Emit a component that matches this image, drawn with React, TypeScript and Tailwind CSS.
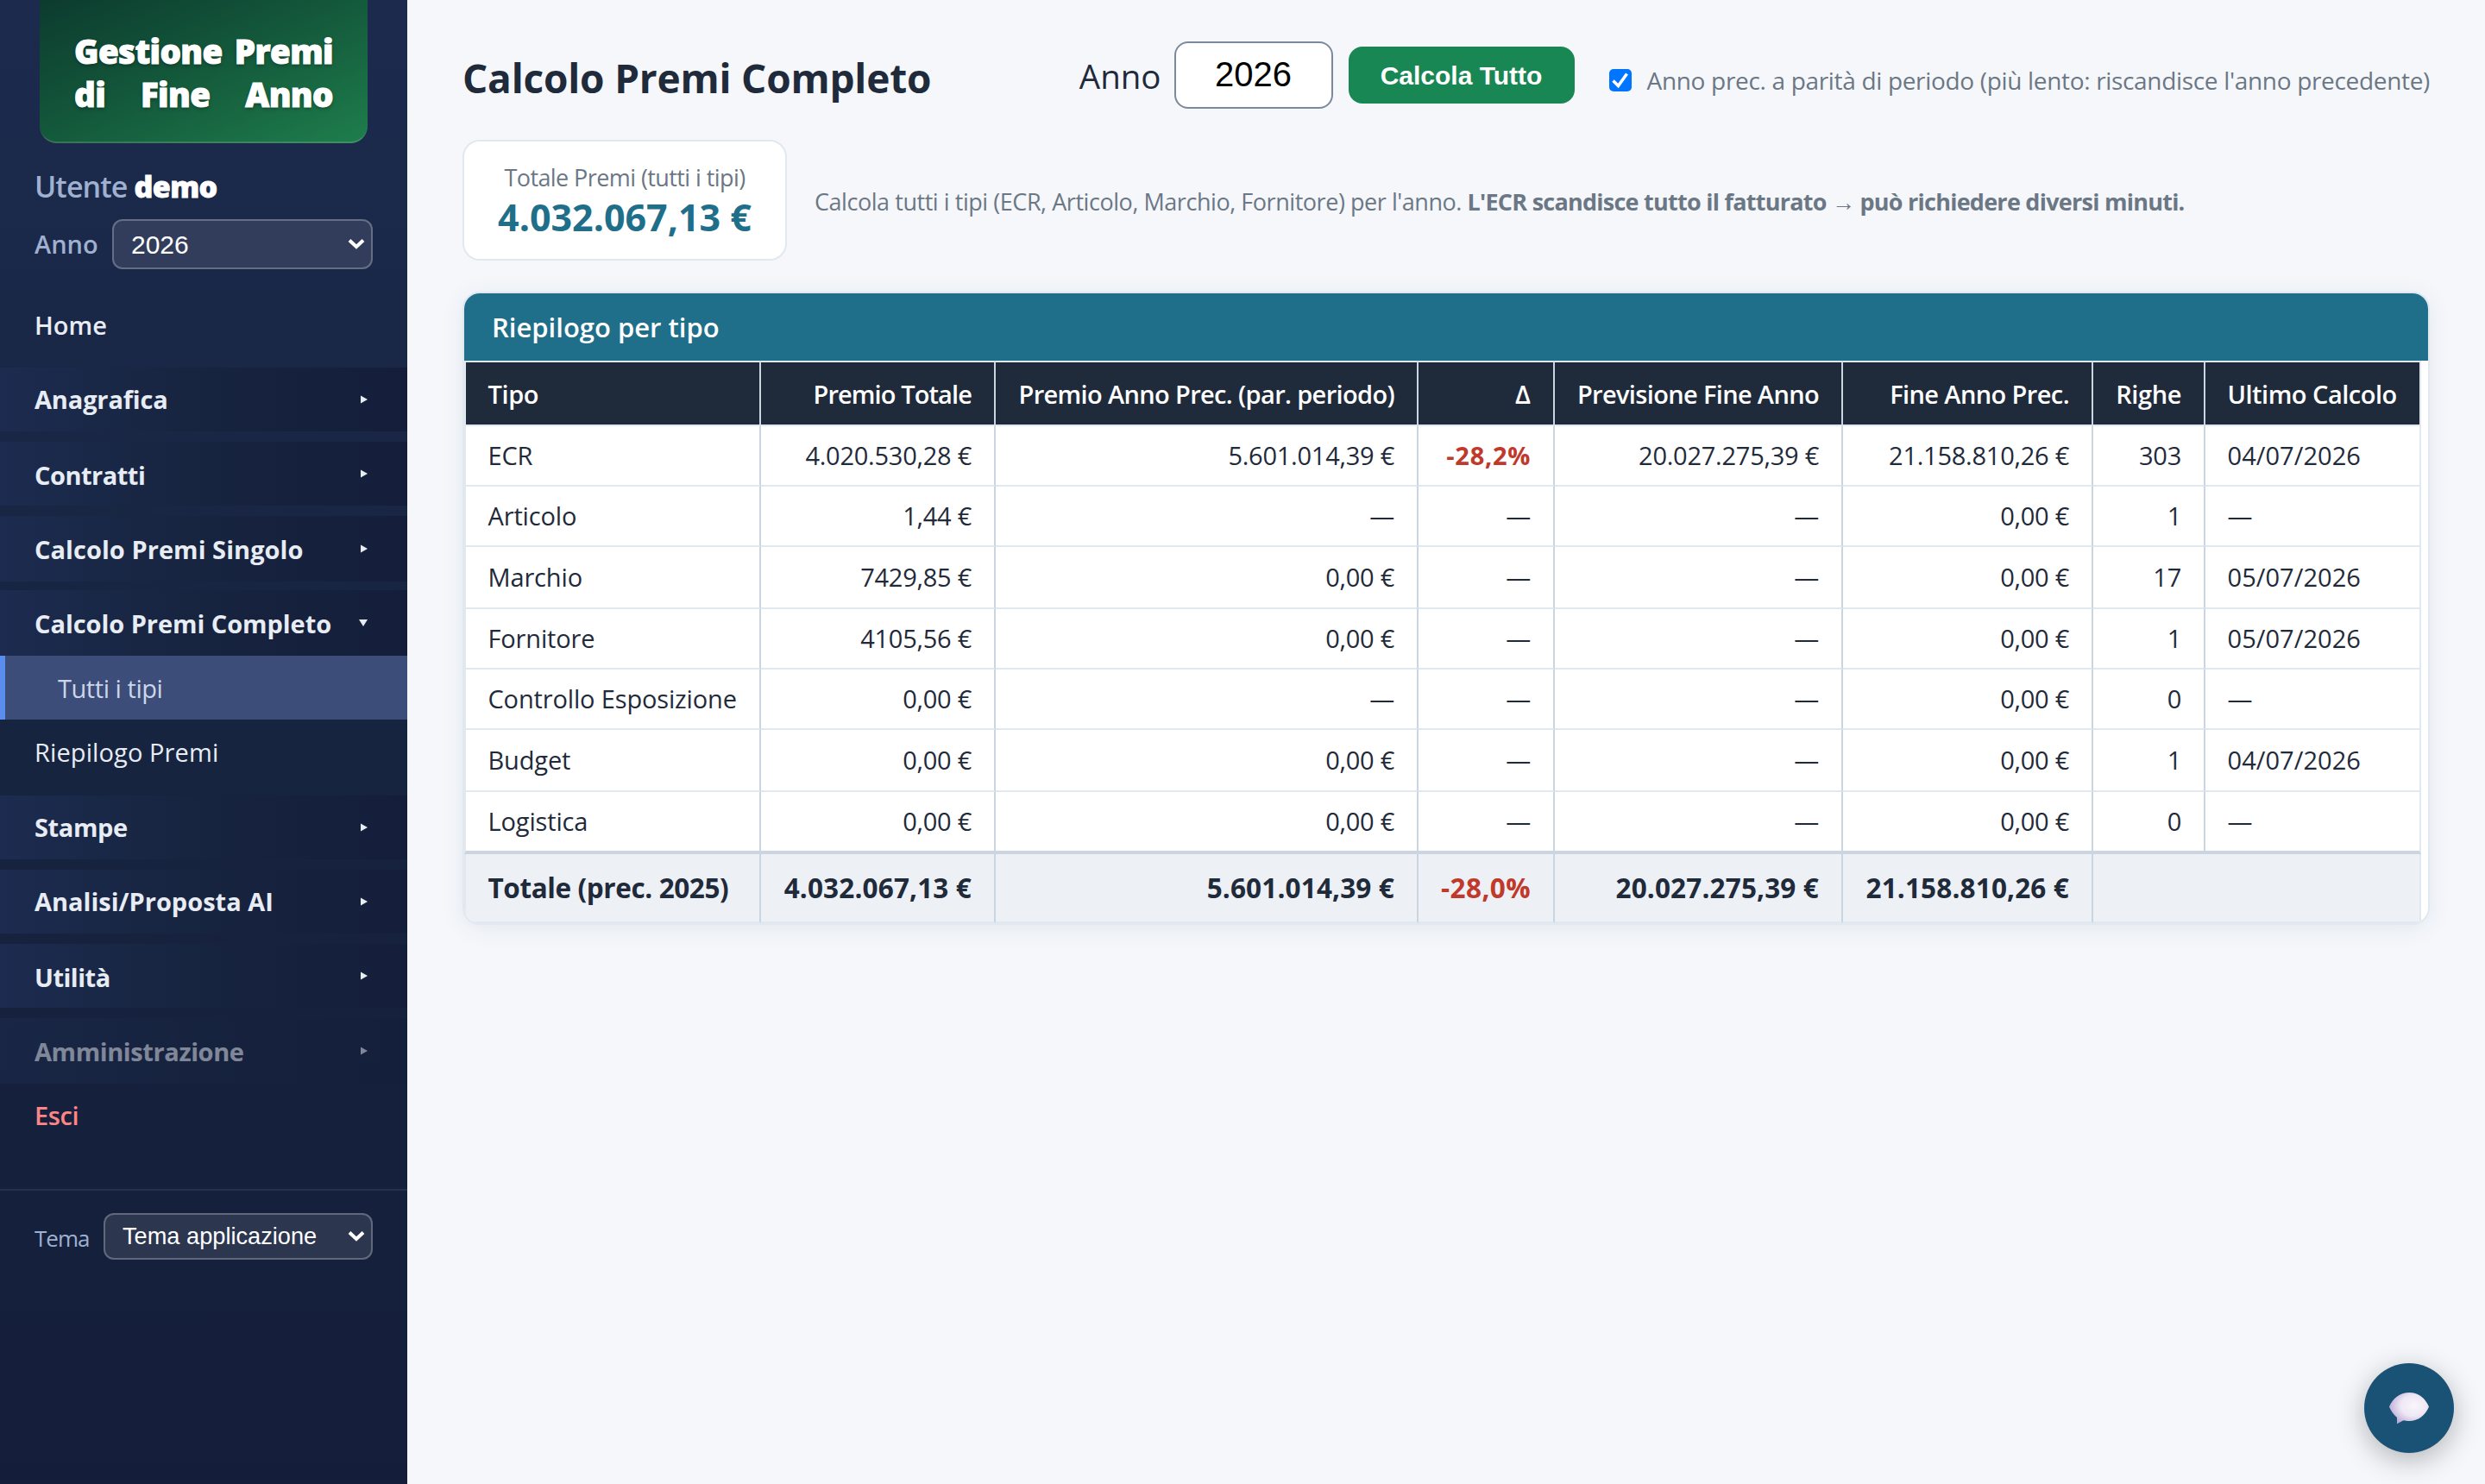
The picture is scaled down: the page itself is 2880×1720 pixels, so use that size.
import clsx from "clsx";

type MenuItem = {
  label: string;
  className: string;
  textClass?: string;
  open?: boolean;
  disabled?: boolean;
};

const GROUPS_TOP: MenuItem[] = [
  { label: "Anagrafica", className: "mt-3 h-[74px]", textClass: "tracking-[-0.15px]" },
  { label: "Contratti", className: "mt-3 h-[74px]", textClass: "pt-[3px] tracking-[-0.5px]" },
  { label: "Calcolo Premi Singolo", className: "mt-3 h-[76px]", textClass: "pt-px tracking-[0.05px]" },
  { label: "Calcolo Premi Completo", className: "mt-2.5 h-[76px]", textClass: "pt-px tracking-[-0.05px]", open: true },
];

const GROUPS_BOTTOM: MenuItem[] = [
  { label: "Stampe", className: "mt-3 h-[74px]", textClass: "tracking-[-0.4px]" },
  { label: "Analisi/Proposta AI", className: "mt-3 h-[74px]", textClass: "" },
  { label: "Utilità", className: "mt-3 h-[74px]", textClass: "pt-[3px] tracking-[-0.5px]" },
  { label: "Amministrazione", className: "mt-3 h-[76px]", textClass: "pt-px tracking-[-0.4px]", disabled: true },
];

const COLUMNS = [
  { label: "Tipo", width: "w-[344px]", head: "tracking-[-0.4px]", body: "tracking-[-0.15px]" },
  { label: "Premio Totale", width: "w-[272px]", head: "tracking-[-0.9px]", body: "tracking-[-0.25px]", right: true },
  { label: "Premio Anno Prec. (par. periodo)", width: "w-[490px]", head: "tracking-[-0.65px]", body: "tracking-[-0.25px]", right: true },
  { label: "Δ", width: "w-[158px]", head: "", body: "tracking-[-0.25px]", right: true },
  { label: "Previsione Fine Anno", width: "w-[334px]", head: "tracking-[-0.65px]", body: "tracking-[-0.25px]", right: true },
  { label: "Fine Anno Prec.", width: "w-[290px]", head: "tracking-[-0.6px]", body: "tracking-[-0.25px]", right: true },
  { label: "Righe", width: "w-[130px]", head: "tracking-[-0.4px]", body: "tracking-[-0.25px]", right: true },
  { label: "Ultimo Calcolo", width: "w-[250px]", head: "tracking-[-0.5px]", body: "tracking-[0.05px]" },
];

const ROWS = [
  { h: "h-[70px]", cells: ["ECR", "4.020.530,28 €", "5.601.014,39 €", "-28,2%", "20.027.275,39 €", "21.158.810,26 €", "303", "04/07/2026"] },
  { h: "h-[70px]", cells: ["Articolo", "1,44 €", "—", "—", "—", "0,00 €", "1", "—"] },
  { h: "h-[72px]", cells: ["Marchio", "7429,85 €", "0,00 €", "—", "—", "0,00 €", "17", "05/07/2026"] },
  { h: "h-[70px]", cells: ["Fornitore", "4105,56 €", "0,00 €", "—", "—", "0,00 €", "1", "05/07/2026"] },
  { h: "h-[70px]", cells: ["Controllo Esposizione", "0,00 €", "—", "—", "—", "0,00 €", "0", "—"] },
  { h: "h-[72px]", cells: ["Budget", "0,00 €", "0,00 €", "—", "—", "0,00 €", "1", "04/07/2026"] },
  { h: "h-[72px]", cells: ["Logistica", "0,00 €", "0,00 €", "—", "—", "0,00 €", "0", "—"] },
];

const TOTALS = ["Totale (prec. 2025)", "4.032.067,13 €", "5.601.014,39 €", "-28,0%", "20.027.275,39 €", "21.158.810,26 €"];

function Arrow({ open }: { open?: boolean }) {
  return (
    <svg viewBox="0 0 10 10" className="mr-[46px] h-2.5 w-2.5 shrink-0 fill-current">
      {open ? <path d="M0 1h10L5 9z" /> : <path d="M2 0.5l8 4.5-8 4.5z" />}
    </svg>
  );
}

function Chevron() {
  return (
    <svg viewBox="0 0 20 14" className="h-3.5 w-5 shrink-0" fill="none" stroke="#fff" strokeWidth="4">
      <path d="M2 2.5l8 7.5 8-7.5" />
    </svg>
  );
}

function Select({ value, className }: { value: string; className: string }) {
  return (
    <div
      className={clsx(
        "flex items-center justify-between rounded-xl border-2 border-white/25 bg-white/10 pl-5 pr-[7px] font-['Liberation_Sans',sans-serif] text-white",
        className,
      )}
    >
      <span>{value}</span>
      <Chevron />
    </div>
  );
}

function MenuGroup({ item }: { item: MenuItem }) {
  return (
    <div
      className={clsx(
        "flex items-center justify-between bg-linear-to-r from-[#1c2b4f] via-[#17243f] to-[#141e3a] pl-10 font-bold text-[#e8ecf4]",
        item.className,
        item.disabled && "opacity-50",
      )}
    >
      <span className={item.textClass}>{item.label}</span>
      <Arrow open={item.open} />
    </div>
  );
}

function Sidebar() {
  return (
    <aside className="flex w-[472px] shrink-0 flex-col bg-linear-to-b from-[#1c2a4e] via-[#17243f] to-[#141e3a] text-[29px] whitespace-nowrap">
      <div className="mx-[46px] h-[166px] rounded-b-[20px] border-b-2 border-white/15 bg-linear-to-br from-[#0c3b2e] via-[#145a3c] to-[#1e7e4c] bg-origin-border px-10 pt-[34px] text-[38.5px] leading-[50px] font-extrabold tracking-[-0.6px] text-white [-webkit-text-stroke:1px_white] [text-shadow:0_2px_4px_rgba(0,0,0,0.35)]">
        <div className="flex justify-between">
          <span>Gestione</span>
          <span>Premi</span>
        </div>
        <div className="flex justify-between">
          <span>di</span>
          <span>Fine</span>
          <span>Anno</span>
        </div>
      </div>

      <div className="mt-7 pl-10 text-[34px] leading-[44px] font-semibold tracking-[-0.9px] text-[#9fb0d0]">
        Utente{" "}
        <span className="font-extrabold tracking-[-0.6px] text-white [-webkit-text-stroke:0.8px_white]">demo</span>
      </div>
      <div className="mt-4 flex items-center justify-between pr-10 pl-10 font-semibold text-[#9fb0d0]">
        <span>Anno</span>
        <Select value="2026" className="h-[58px] w-[302px] text-[30px] font-normal" />
      </div>

      <nav className="mt-7">
        <div className="flex h-[74px] items-center pl-10 font-semibold text-[#e8ecf4]">Home</div>
        {GROUPS_TOP.map((g) => (
          <MenuGroup key={g.label} item={g} />
        ))}
        <div className="flex h-[74px] items-center border-l-[6px] border-[#5b8def] bg-[#3b4d78] pt-0.5 pl-[61px] tracking-[-0.45px] text-[#cdd6e8]">
          Tutti i tipi
        </div>
        <div className="flex h-[76px] items-center pl-10 tracking-[0.1px] text-[#e8ecf4]">Riepilogo Premi</div>
        {GROUPS_BOTTOM.map((g) => (
          <MenuGroup key={g.label} item={g} />
        ))}
        <div className="flex h-[74px] items-center pl-10 font-semibold tracking-[-0.4px] text-[#ff8585]">Esci</div>
      </nav>

      <div className="mt-12 flex items-center justify-between border-t-2 border-white/8 px-10 pt-[26px] text-[#9fb0d0]">
        <span className="pt-[5px] text-[26px] tracking-[-1px]">Tema</span>
        <Select value="Tema applicazione" className="h-[54px] w-[312px] text-[27.2px]" />
      </div>
    </aside>
  );
}

function Toolbar() {
  return (
    <header className="flex h-[78px] items-center whitespace-nowrap">
      <h1 className="pt-1.5 text-[46px] font-bold tracking-[-0.2px]">Calcolo Premi Completo</h1>
      <div className="ml-auto flex items-center">
        <span className="pt-[3px] text-[38.5px]">Anno</span>
        <div className="ml-[15px] flex h-[78px] w-[184px] items-center justify-center rounded-2xl border-2 border-[#7b8a9b] bg-white pb-0.5 font-['Liberation_Sans',sans-serif] text-[40px] text-black">
          2026
        </div>
        <button className="ml-[18px] h-[66px] w-[262px] rounded-2xl bg-[#198754] font-['Liberation_Sans',sans-serif] text-[30px] font-bold text-white">
          Calcola Tutto
        </button>
        <label className="ml-10 flex items-center pt-[11px] text-[28px] text-[#6b7785]">
          <span className="mr-[18px] grid h-[26px] w-[26px] place-items-center rounded-[5px] bg-[#0075ff]">
            <svg viewBox="0 0 26 26" className="h-[26px] w-[26px]" fill="none" stroke="#fff" strokeWidth="3.6">
              <path d="M4.5 13.5l6 6L20.5 5.5" />
            </svg>
          </span>
          <span className="tracking-[-0.325px]">Anno prec. a parità di periodo (più lento: riscandisce l'anno precedente)</span>
        </label>
      </div>
    </header>
  );
}

function Summary() {
  return (
    <section className="mt-9 flex items-center whitespace-nowrap">
      <div className="h-[140px] w-[376px] shrink-0 rounded-[20px] border-2 border-[#e2e8f0] bg-white pt-[22px] text-center">
        <div className="text-[27px] leading-10 tracking-[-0.58px] text-[#6b7785]">Totale Premi (tutti i tipi)</div>
        <div className="text-[43px] leading-[51px] font-bold text-[#1f6f8b]">4.032.067,13 €</div>
      </div>
      <p className="ml-8 pt-1 text-[27px] tracking-[-0.45px] text-[#6b7785]">
        Calcola tutti i tipi (ECR, Articolo, Marchio, Fornitore) per l'anno.{" "}
        <strong className="font-bold tracking-[-0.75px]">
          L'ECR scandisce tutto il fatturato → può richiedere diversi minuti.
        </strong>
      </p>
    </section>
  );
}

function PremiTable() {
  return (
    <section className="mt-9 overflow-hidden rounded-[20px] border-2 border-[#e2e8f0] bg-white shadow-[0_4px_28px_rgba(31,60,90,0.08)]">
      <h2 className="flex h-[78px] items-center bg-[#1f6f8b] pt-px pl-8 text-[31px] font-semibold text-white">
        Riepilogo per tipo
      </h2>
      <table className="w-[2268px] table-fixed border-separate border-spacing-0 text-[29px] leading-10 whitespace-nowrap">
        <thead>
          <tr className="h-[76px] bg-[#1f2a3a] text-white">
            {COLUMNS.map((c, i) => (
              <th
                key={c.label}
                className={clsx(
                  "border-y-2 border-r-2 border-y-[#e2e8f0] border-r-[#cbd5e0] pt-px font-semibold last:border-r-[#e2e8f0]",
                  c.width,
                  c.head,
                  c.right ? "pr-[26px] text-right" : "pl-[25.5px] text-left",
                  i === 0 && "border-l-2 border-l-[#e2e8f0]",
                )}
              >
                {c.label}
              </th>
            ))}
          </tr>
        </thead>
        <tbody>
          {ROWS.map((row, r) => (
            <tr key={row.cells[0]} className={row.h}>
              {row.cells.map((cell, i) => (
                <td
                  key={i}
                  className={clsx(
                    "border-r-2 border-r-[#cbd5e0] last:border-r-[#e2e8f0]",
                    r === ROWS.length - 1 ? "border-b-4 border-b-[#cbd5e0]" : "border-b-2 border-b-[#e2e8f0]",
                    COLUMNS[i].right ? "pr-[26px] text-right" : "pl-[25.5px]",
                    i === 0 && "border-l-2 border-l-[#e2e8f0]",
                    cell.startsWith("-") ? "font-bold tracking-[0.7px] text-[#c0392b]" : COLUMNS[i].body,
                  )}
                >
                  {cell}
                </td>
              ))}
            </tr>
          ))}
        </tbody>
        <tfoot>
          <tr className="h-20 bg-[#edf1f6] text-[31.5px] font-bold">
            {TOTALS.map((cell, i) => (
              <td
                key={i}
                className={clsx(
                  "border-r-2 border-b-2 border-r-[#cbd5e0] border-b-[#e2e8f0]",
                  i === 0 ? "border-l-2 border-l-[#e2e8f0] pl-[25.5px] tracking-[-0.4px]" : "pr-[26px] text-right",
                  i > 0 && (cell.startsWith("-") ? "tracking-[0.4px] text-[#c0392b]" : "tracking-[0.15px]"),
                )}
              >
                {cell}
              </td>
            ))}
            <td colSpan={2} className="border-r-2 border-b-2 border-[#e2e8f0]" />
          </tr>
        </tfoot>
      </table>
    </section>
  );
}

function ChatButton() {
  return (
    <button className="fixed right-9 bottom-9 grid h-[104px] w-[104px] place-items-center rounded-full bg-[#1a5276] shadow-[0_8px_32px_rgba(0,0,0,0.28)]">
      <svg viewBox="0 0 48 40" className="h-10 w-12">
        <defs>
          <radialGradient id="bubble" cx="0.62" cy="0.42" r="0.66">
            <stop offset="0" stopColor="#f8f6fb" />
            <stop offset="0.5" stopColor="#eee8f5" />
            <stop offset="1" stopColor="#b9a8d6" />
          </radialGradient>
        </defs>
        <path
          d="M1 18.5C5 9 13 2 24.300 2S43 9 47 18.500C43 28.500 34.500 35 24.300 35C21.500 35 19.500 34.700 17.500 34.300L10 38.300L10 31C6 27.500 3 23.500 1 18.500Z"
          fill="url(#bubble)"
        />
      </svg>
    </button>
  );
}

export default function App() {
  return (
    <div className="flex h-[1720px] w-[2880px] overflow-hidden bg-[#f5f7fb] font-['Open_Sans','Noto_Sans',sans-serif] text-[#1f2a3a]">
      <Sidebar />
      <main className="flex-1 px-16 pt-12">
        <Toolbar />
        <Summary />
        <PremiTable />
      </main>
      <ChatButton />
    </div>
  );
}
